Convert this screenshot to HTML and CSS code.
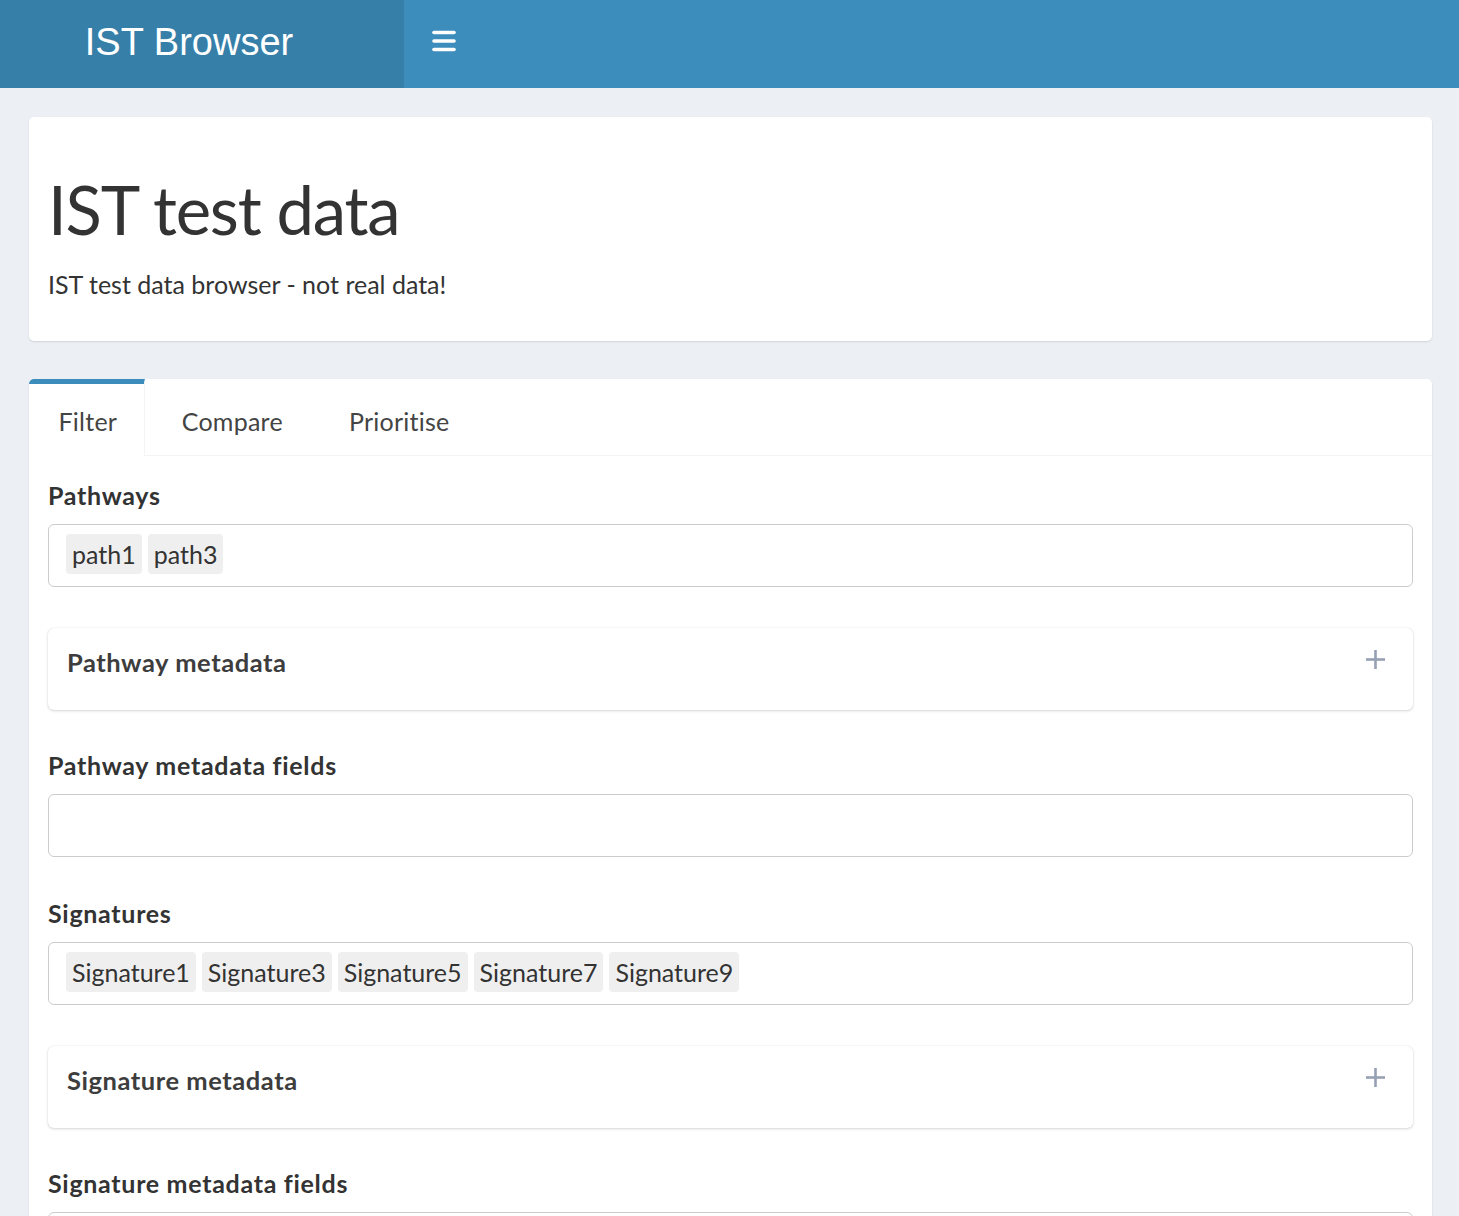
FILE: index.html
```html
<!DOCTYPE html>
<html>
<head>
<meta charset="utf-8">
<title>IST Browser</title>
<link rel="stylesheet" href="styles.css">
</head>
<body>
<header class="main-header">
  <div class="logo">IST Browser</div>
  <nav class="navbar">
    <span class="toggle">
      <svg width="24" height="22" viewBox="0 0 24 22"><g stroke="#fff" stroke-width="3.6" stroke-linecap="round"><line x1="2" y1="2.5" x2="22" y2="2.5"/><line x1="2" y1="11" x2="22" y2="11"/><line x1="2" y1="19.5" x2="22" y2="19.5"/></g></svg>
    </span>
  </nav>
</header>
<main class="content">
  <section class="box intro">
    <h1>IST test data</h1>
    <p>IST test data browser - not real data!</p>
  </section>
  <section class="tabbox">
    <ul class="tabs">
      <li class="tab active">Filter</li>
      <li class="tab">Compare</li>
      <li class="tab">Prioritise</li>
    </ul>
    <div class="tab-content">
      <div class="form-group before-card">
        <label class="label">Pathways</label>
        <div class="select"><span class="chip">path1</span><span class="chip">path3</span></div>
      </div>
      <div class="card">
        <span class="card-title">Pathway metadata</span>
        <svg class="plus" width="19" height="19" viewBox="0 0 19 19"><g stroke="#97a0b3" stroke-width="2.6"><line x1="9.5" y1="0" x2="9.5" y2="19"/><line x1="0" y1="9.5" x2="19" y2="9.5"/></g></svg>
      </div>
      <div class="form-group">
        <label class="label">Pathway metadata fields</label>
        <div class="select"></div>
      </div>
      <div class="form-group before-card">
        <label class="label">Signatures</label>
        <div class="select"><span class="chip">Signature1</span><span class="chip">Signature3</span><span class="chip">Signature5</span><span class="chip">Signature7</span><span class="chip">Signature9</span></div>
      </div>
      <div class="card">
        <span class="card-title">Signature metadata</span>
        <svg class="plus" width="19" height="19" viewBox="0 0 19 19"><g stroke="#97a0b3" stroke-width="2.6"><line x1="9.5" y1="0" x2="9.5" y2="19"/><line x1="0" y1="9.5" x2="19" y2="9.5"/></g></svg>
      </div>
      <div class="form-group">
        <label class="label">Signature metadata fields</label>
        <div class="select"></div>
      </div>
    </div>
  </section>
</main>
</body>
</html>
```

FILE: styles.css
```css
* { box-sizing: border-box; }
html, body { margin: 0; padding: 0; }
body {
  background: #ecf0f5;
  font-family: Lato, "Liberation Sans", sans-serif;
  font-size: 25px;
  line-height: 36px;
  color: #333;
}
.main-header {
  display: flex;
  height: 88px;
  background: #3c8dbc;
}
.logo {
  width: 404px;
  background: #367fa9;
  color: #fff;
  font-family: "Liberation Sans", Arial, sans-serif;
  font-size: 38px;
  display: flex;
  align-items: center;
  justify-content: center;
  padding: 0 26px 5px 0;
}
.navbar {
  display: flex;
  align-items: flex-start;
  padding-left: 28px;
}
.toggle { display: flex; margin-top: 30px; }
.content {
  padding: 29px 27px 0 29px;
}
.box {
  background: #fff;
  border-radius: 5px;
  box-shadow: 0 1px 2px rgba(0,0,0,0.12);
}
.intro {
  padding: 55px 19px 39px;
  margin-bottom: 38px;
}
.intro h1 {
  margin: 0 0 20px;
  font-weight: 400;
  font-size: 67px;
  line-height: 74px;
  letter-spacing: -1.2px;
  color: #333;
}
.intro p { margin: 0; }
.tabbox {
  background: #fff;
  border-radius: 5px 5px 0 0;
  box-shadow: 0 1px 2px rgba(0,0,0,0.12);
}
.tabs {
  list-style: none;
  margin: 0;
  padding: 0;
  display: flex;
  gap: 7px;
  border-bottom: 1px solid #f4f4f4;
}
.tab {
  padding: 19px 29.5px 17px 29.5px;
  border-top: 5px solid transparent;
  color: #444;
  letter-spacing: 0.25px;
  margin-bottom: -1px;
}
.tab.active {
  border-top-color: #3c8dbc;
  border-right: 1px solid #f4f4f4;
  background: #fff;
  border-top-left-radius: 5px;
  padding-right: 27px;
}
.tab-content {
  padding: 21px 19px 0 19px;
}
.form-group { margin-bottom: 38px; }
.form-group.before-card { margin-bottom: 41px; }
.label {
  display: block;
  font-weight: 700;
  letter-spacing: 0.7px;
  margin-bottom: 11px;
}
.select {
  border: 1px solid #ccc;
  border-radius: 6px;
  min-height: 63px;
  padding: 9px 17px 12px;
  display: flex;
  gap: 6px;
}
.chip {
  background: #efefef;
  border-radius: 4px;
  height: 40px;
  line-height: 40px;
  padding: 0 6px;
}
.card {
  height: 82px;
  border-radius: 6px;
  background: #fff;
  box-shadow: 0 0 1px rgba(0,0,0,0.13), 0 1px 3px rgba(0,0,0,0.16);
  padding: 16px 28px 0 19px;
  display: flex;
  justify-content: space-between;
  align-items: flex-start;
  margin-bottom: 37px;
}
.card-title {
  font-weight: 700;
  font-size: 25.5px;
  letter-spacing: 0.55px;
  color: #3d3d3d;
}
.plus { margin-top: 6px; }
```
